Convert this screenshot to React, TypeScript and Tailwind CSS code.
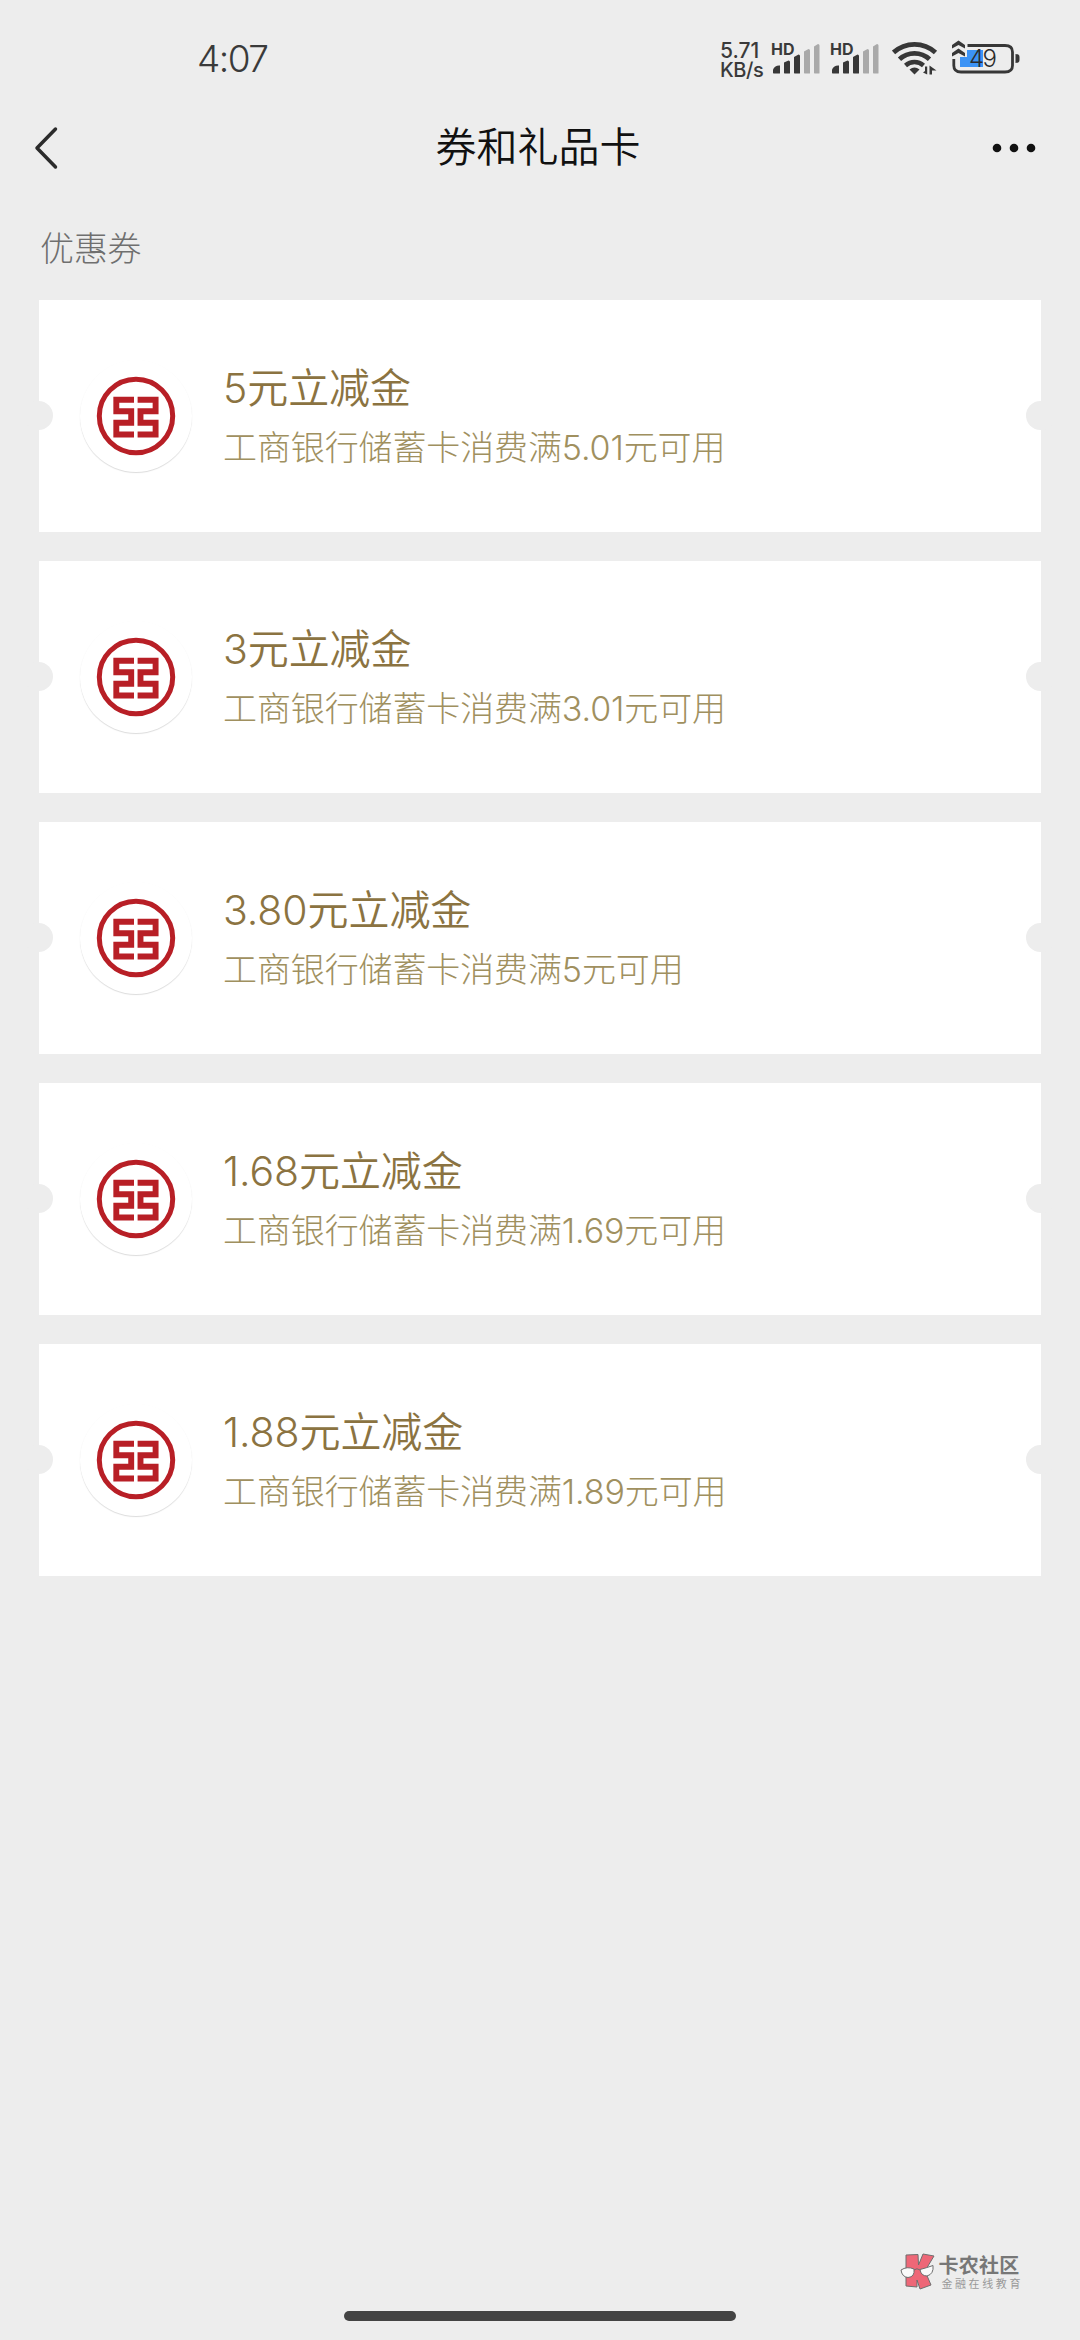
const coupons = [
  { id: 1, amount: "5", limit: "5.01" },
  { id: 2, amount: "3", limit: "3.01" },
  { id: 3, amount: "3.80", limit: "5" },
  { id: 4, amount: "1.68", limit: "1.69" },
  { id: 5, amount: "1.88", limit: "1.89" },
];

function Signal() {
  return (
    <div className="relative h-[34px] w-[49px]">
      <span className="absolute left-0 top-px text-[16px] font-bold leading-[16px] text-[#3a3a3a]">
        HD
      </span>
      <svg className="block" width="49" height="34" viewBox="0 0 49 34">
        <g fill="#373737">
          <path d="M2 33V29.5Q4 25.5 8 25.5H9V33Q9 33.5 8.500 33.500H2.500Z" />
          <path d="M13 33V22.500L17.500 20.500Q19 20.500 19 22V33Q19 33.500 18.500 33.500H13.500Z" />
          <path d="M23 33V17L27.500 14.500Q29 14.500 29 16V33Q29 33.500 28.500 33.500H23.500Z" />
        </g>
        <g fill="#a9a9a9">
          <path d="M33 33V11.500L37.500 9Q39 9 39 10.500V33Q39 33.500 38.500 33.500H33.500Z" />
          <path d="M43 33V6.500L47 4Q48.500 4 48.500 5.500V33Q48.500 33.500 48 33.500H43.500Z" />
        </g>
      </svg>
    </div>
  );
}

function Wifi() {
  return (
    <svg width="46" height="34" viewBox="0 0 46 34" fill="none" stroke="#373737">
      <path d="M1.500 11.500A31 31 0 0 1 43.500 11.500" strokeWidth="4.800" />
      <path d="M7.500 18.200A22 22 0 0 1 37.500 18.200" strokeWidth="4.800" />
      <path d="M13.500 24.500A13.500 13.500 0 0 1 31.500 24.500" strokeWidth="4.500" />
      <path d="M17.500 28.500Q22.500 24.500 27.500 28.500L22.500 33.500Z" fill="#373737" stroke="none" />
      <path d="M31 31.500L35.200 33.500V25.500H33V30ZM37.500 33.500V24.500L44.500 29.500H40V33.500Z" fill="#373737" stroke="none" />
    </svg>
  );
}

function Battery() {
  return (
    <div className="relative h-[36px] w-[69px]">
      <svg className="block" width="69" height="36" viewBox="0 0 69 36" fill="none">
        <path d="M8 10V27H31V10H15V17H8Z" fill="#3c93f5" />
        <path
          d="M15.500 5.500H53Q60.500 5.500 60.500 12V25.500Q60.500 32 53 32H9Q1.800 32 1.800 25.500V19"
          stroke="#373737"
          strokeWidth="2.800"
        />
        <path d="M63.500 14Q67.500 14 67.500 17V20Q67.500 23 63.500 23Z" fill="#373737" />
        <path d="M0 5L6.500 0.500L13 5V8.500L6.500 5L0 8.500ZM0 13L6.500 8.500L13 13V16.500L6.500 13L0 16.500Z" fill="#373737" />
      </svg>
      <span className="absolute left-[17px] top-[6px] text-[24px] font-[350] leading-[26px] tracking-[-1.5px] text-[#2b2b2b]">
        49
      </span>
    </div>
  );
}

function StatusBar() {
  return (
    <div className="flex h-[104px] items-start pl-[197px] pt-[40px] font-['Inter','Liberation_Sans',sans-serif] text-[#3a3a3a]">
      <span className="w-[523px] text-[37px] font-[350] leading-[38px] tracking-[-1.5px]">4:07</span>
      <div className="flex w-[51px] flex-col pt-px text-[21px] font-medium leading-[19px]">
        <span className="leading-[20px]">5.71</span>
        <span className="text-[20px] leading-[18px] tracking-[-0.4px]">KB/s</span>
      </div>
      <div className="mr-[13px] flex gap-[10px]">
        <Signal />
        <Signal />
      </div>
      <div className="flex gap-[14px]">
        <div className="pt-px">
          <Wifi />
        </div>
        <Battery />
      </div>
    </div>
  );
}

function NavBar() {
  return (
    <div className="flex h-[88px] items-center pl-[33px] pr-[44px]">
      <svg width="44" height="44" viewBox="0 0 44 44" fill="none" stroke="#2b2b2b" strokeWidth="3.500">
        <path d="M22.500 3L4 22L22.500 41" strokeLinecap="round" strokeLinejoin="round" />
      </svg>
      <h1 className="flex-1 pb-[2px] pl-[7px] text-center text-[41px] font-[350] leading-[60px] text-[#111]">
        券和礼品卡
      </h1>
      <svg width="44" height="10" viewBox="0 0 44 10" fill="#111">
        <circle cx="5" cy="5" r="4.300" />
        <circle cx="22" cy="5" r="4.300" />
        <circle cx="39" cy="5" r="4.300" />
      </svg>
    </div>
  );
}

function BankLogo() {
  return (
    <div className="h-[112px] w-[112px] rounded-full bg-white shadow-[0_1px_1px_rgba(0,0,0,0.14)]">
      <svg width="112" height="112" viewBox="0 0 112 112" fill="none" stroke="#b81f26">
        <circle cx="56" cy="56" r="36.700" strokeWidth="5" />
        <path
          d="M54 39.700H36.300V51.200H51.200V62.800H36.300V74.500H54M57.600 39.700H75.600V51.200H60.500V62.800H75.600V74.500H57.600"
          strokeWidth="5.900"
        />
      </svg>
    </div>
  );
}

function CouponCard({ amount, limit }: { amount: string; limit: string }) {
  return (
    <div className="relative flex h-[232px] items-center bg-white pl-[41px]">
      <BankLogo />
      <div className="ml-[31px] flex flex-col gap-[8px] pt-[2px]">
        <span className="text-[41px] font-[350] leading-[54px] tracking-[-0.1px] text-[#8b7341]">
          {amount}元立减金
        </span>
        <span className="text-[34px] font-light leading-[50px] tracking-[-0.12px] text-[#a0905f]">
          工商银行储蓄卡消费满{limit}元可用
        </span>
      </div>
      <div className="absolute -left-[15px] top-[101px] h-[29px] w-[29px] rounded-full bg-[#ededed]" />
      <div className="absolute -right-[14px] top-[101px] h-[29px] w-[29px] rounded-full bg-[#ededed]" />
    </div>
  );
}

function Watermark() {
  return (
    <div className="flex gap-[2px] self-end pr-[57px]">
      <svg width="36" height="38" viewBox="0 0 36 38" stroke="#6f6f6f" strokeWidth="1">
        <path d="M6 2L18 1.500L18.500 12L23 1L34 3L25 18L31 32L20 36L17 27V34L6 33Z" fill="#ee6777" />
        <path d="M1 17Q7 13 14 16Q15 24 8 24.500Q2 24 1 17ZM20 16.500Q26 15 33 12.500Q34 21 27 23Q21 23 20 16.500Z" fill="#fafafa" />
        <path d="M14 17Q17 14.500 20 17" fill="none" />
      </svg>
      <div className="flex flex-col pt-px">
        <span className="text-[20px] font-bold leading-[24px] tracking-[0.3px] text-[#777]">卡农社区</span>
        <span className="pl-[3px] text-[11px] leading-[12px] tracking-[2.6px] text-[#999]">金融在线教育</span>
      </div>
    </div>
  );
}

export default function App() {
  return (
    <div className="flex h-[2340px] w-[1080px] flex-col overflow-hidden bg-[#ededed] font-['Inter','Noto_Sans_CJK_SC',sans-serif]">
      <StatusBar />
      <NavBar />
      <div className="flex h-[108px] items-center pl-[40px] pt-[5px]">
        <h2 className="text-[34px] font-light leading-[50px] tracking-[-0.3px] text-[#6f6f6f]">优惠券</h2>
      </div>
      <div className="flex flex-col gap-[29px] px-[39px]">
        {coupons.map((c) => (
          <CouponCard key={c.id} amount={c.amount} limit={c.limit} />
        ))}
      </div>
      <div className="mt-auto flex flex-col pb-[19px]">
        <Watermark />
        <div className="mt-[20px] h-[10px] w-[392px] self-center rounded-full bg-[#434343]" />
      </div>
    </div>
  );
}
